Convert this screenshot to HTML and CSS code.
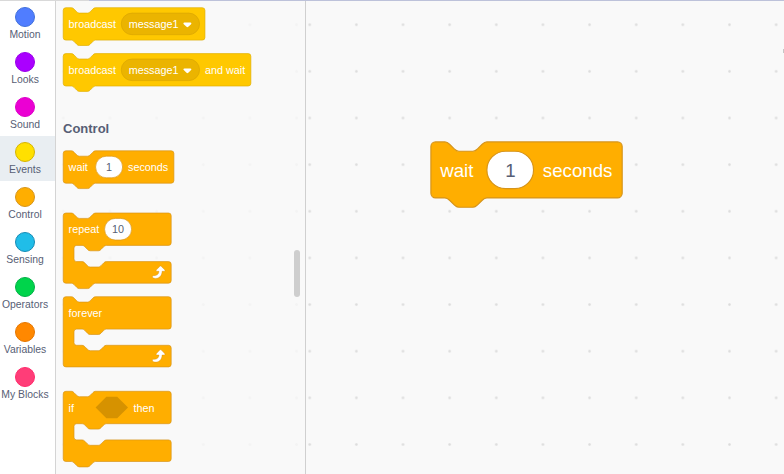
FILE: index.html
```html
<!DOCTYPE html>
<html lang="en">
<head>
<meta charset="utf-8">
<title>Blocks</title>
<link rel="stylesheet" href="styles.css">
</head>
<body>
<div class="editor">
  <nav class="categories">
    <div class="category"><span class="bubble motion"></span><span class="name">Motion</span></div>
    <div class="category"><span class="bubble looks"></span><span class="name">Looks</span></div>
    <div class="category"><span class="bubble sound"></span><span class="name">Sound</span></div>
    <div class="category selected"><span class="bubble events"></span><span class="name">Events</span></div>
    <div class="category"><span class="bubble control"></span><span class="name">Control</span></div>
    <div class="category"><span class="bubble sensing"></span><span class="name">Sensing</span></div>
    <div class="category"><span class="bubble operators"></span><span class="name">Operators</span></div>
    <div class="category"><span class="bubble variables"></span><span class="name">Variables</span></div>
    <div class="category"><span class="bubble myblocks"></span><span class="name">My Blocks</span></div>
  </nav>

  <section class="flyout">
    <svg class="block b-broadcast" width="143" height="38">
      <g class="yellow" transform="translate(.2 .7) scale(.675)">
        <path class="body" d="M0,4A4,4 0 0,1 4,0H12c2,0 3,1 4,2l4,4c1,1 2,2 4,2h12c2,0 3,-1 4,-2l4,-4c1,-1 2,-2 4,-2H206a4,4 0 0,1 4,4v40a4,4 0 0,1 -4,4H48c-2,0 -3,1 -4,2l-4,4c-1,1 -2,2 -4,2h-12c-2,0 -3,-1 -4,-2l-4,-4c-1,-1 -2,-2 -4,-2H4a4,4 0 0,1 -4,-4z"/>
        <text x="8" y="29.6">broadcast</text>
        <rect class="menu" x="86" y="8" width="116" height="32" rx="16"/>
        <text x="97" y="29.6">message1</text>
        <path class="arrow" d="M179.600,22h8.800c1.500,0 2,1.400 1,2.400l-4.100,4c-.8,.8 -1.800,.8 -2.600,0l-4.100,-4c-1,-1 -.5,-2.400 1,-2.400z"/>
      </g>
    </svg>
    <svg class="block b-broadcast-wait" width="189" height="38">
      <g class="yellow" transform="translate(.2 .6) scale(.675)">
        <path class="body" d="M0,4A4,4 0 0,1 4,0H12c2,0 3,1 4,2l4,4c1,1 2,2 4,2h12c2,0 3,-1 4,-2l4,-4c1,-1 2,-2 4,-2H274a4,4 0 0,1 4,4v40a4,4 0 0,1 -4,4H48c-2,0 -3,1 -4,2l-4,4c-1,1 -2,2 -4,2h-12c-2,0 -3,-1 -4,-2l-4,-4c-1,-1 -2,-2 -4,-2H4a4,4 0 0,1 -4,-4z"/>
        <text x="8" y="29.6">broadcast</text>
        <rect class="menu" x="86" y="8" width="116" height="32" rx="16"/>
        <text x="97" y="29.6">message1</text>
        <path class="arrow" d="M179.600,22h8.800c1.500,0 2,1.400 1,2.400l-4.100,4c-.8,.8 -1.800,.8 -2.600,0l-4.100,-4c-1,-1 -.5,-2.400 1,-2.400z"/>
        <text x="210" y="29.6">and wait</text>
      </g>
    </svg>
    <h2 class="heading">Control</h2>
    <svg class="block b-wait" width="111" height="38">
      <g class="orange" transform="translate(.2 .8) scale(.675)">
        <path class="body" d="M0,4A4,4 0 0,1 4,0H12c2,0 3,1 4,2l4,4c1,1 2,2 4,2h12c2,0 3,-1 4,-2l4,-4c1,-1 2,-2 4,-2H160a4,4 0 0,1 4,4v40a4,4 0 0,1 -4,4H48c-2,0 -3,1 -4,2l-4,4c-1,1 -2,2 -4,2h-12c-2,0 -3,-1 -4,-2l-4,-4c-1,-1 -2,-2 -4,-2H4a4,4 0 0,1 -4,-4z"/>
        <text x="8" y="29.6">wait</text>
        <rect class="input" x="48" y="8" width="40" height="32" rx="16"/>
        <text class="value" x="68" y="29.6">1</text>
        <text x="96" y="29.6">seconds</text>
      </g>
    </svg>
    <svg class="block b-repeat" width="109" height="76">
      <g class="orange" transform="translate(.2 0) scale(.675)">
        <path class="body" d="M0,4A4,4 0 0,1 4,0H12c2,0 3,1 4,2l4,4c1,1 2,2 4,2h12c2,0 3,-1 4,-2l4,-4c1,-1 2,-2 4,-2H156a4,4 0 0,1 4,4v40a4,4 0 0,1 -4,4H64c-2,0 -3,1 -4,2l-4,4c-1,1 -2,2 -4,2h-12c-2,0 -3,-1 -4,-2l-4,-4c-1,-1 -2,-2 -4,-2h-8a4,4 0 0,0 -4,4v16a4,4 0 0,0 4,4h8c2,0 3,1 4,2l4,4c1,1 2,2 4,2h12c2,0 3,-1 4,-2l4,-4c1,-1 2,-2 4,-2H156a4,4 0 0,1 4,4v24a4,4 0 0,1 -4,4H48c-2,0 -3,1 -4,2l-4,4c-1,1 -2,2 -4,2h-12c-2,0 -3,-1 -4,-2l-4,-4c-1,-1 -2,-2 -4,-2H4a4,4 0 0,1 -4,-4z"/>
        <text x="8" y="29.6">repeat</text>
        <rect class="input" x="61.3" y="8" width="40" height="32" rx="16"/>
        <text class="value" x="81.3" y="29.6">10</text>
        <path class="loop" transform="translate(-1 1)" d="M133.4,94.3c-.9,-1.6 .4,-2.600 2,-2.500c4,.2 7.200,-2 7.500,-6.400h-2.700c-1.5,0 -1.9,-1.3 -1,-2.3l4.8,-5c.7,-.8 1.7,-.8 2.4,0l4.9,5c.9,1 .5,2.3 -1,2.3h-2.800c-.2,7.2 -4.5,10.7 -10.100,10.5c-1.7,0 -3.2,-.4 -4,-1.6z"/>
      </g>
    </svg>
    <svg class="block b-forever" width="109" height="71">
      <g class="orange" transform="translate(.2 .7) scale(.675)">
        <path class="body" d="M0,4A4,4 0 0,1 4,0H12c2,0 3,1 4,2l4,4c1,1 2,2 4,2h12c2,0 3,-1 4,-2l4,-4c1,-1 2,-2 4,-2H156a4,4 0 0,1 4,4v40a4,4 0 0,1 -4,4H64c-2,0 -3,1 -4,2l-4,4c-1,1 -2,2 -4,2h-12c-2,0 -3,-1 -4,-2l-4,-4c-1,-1 -2,-2 -4,-2h-8a4,4 0 0,0 -4,4v16a4,4 0 0,0 4,4h8c2,0 3,1 4,2l4,4c1,1 2,2 4,2h12c2,0 3,-1 4,-2l4,-4c1,-1 2,-2 4,-2H156a4,4 0 0,1 4,4v24a4,4 0 0,1 -4,4H4a4,4 0 0,1 -4,-4z"/>
        <text x="8" y="29.6">forever</text>
        <path class="loop" transform="translate(-1 1)" d="M133.4,94.3c-.9,-1.6 .4,-2.600 2,-2.500c4,.2 7.200,-2 7.500,-6.400h-2.700c-1.5,0 -1.9,-1.3 -1,-2.3l4.8,-5c.7,-.8 1.7,-.8 2.4,0l4.9,5c.9,1 .5,2.3 -1,2.3h-2.800c-.2,7.2 -4.5,10.7 -10.100,10.5c-1.7,0 -3.2,-.4 -4,-1.6z"/>
      </g>
    </svg>
    <svg class="block b-if" width="109" height="76">
      <g class="orange" transform="translate(.2 .3) scale(.675)">
        <path class="body" d="M0,4A4,4 0 0,1 4,0H12c2,0 3,1 4,2l4,4c1,1 2,2 4,2h12c2,0 3,-1 4,-2l4,-4c1,-1 2,-2 4,-2H156a4,4 0 0,1 4,4v40a4,4 0 0,1 -4,4H64c-2,0 -3,1 -4,2l-4,4c-1,1 -2,2 -4,2h-12c-2,0 -3,-1 -4,-2l-4,-4c-1,-1 -2,-2 -4,-2h-8a4,4 0 0,0 -4,4v16a4,4 0 0,0 4,4h8c2,0 3,1 4,2l4,4c1,1 2,2 4,2h12c2,0 3,-1 4,-2l4,-4c1,-1 2,-2 4,-2H156a4,4 0 0,1 4,4v24a4,4 0 0,1 -4,4H48c-2,0 -3,1 -4,2l-4,4c-1,1 -2,2 -4,2h-12c-2,0 -3,-1 -4,-2l-4,-4c-1,-1 -2,-2 -4,-2H4a4,4 0 0,1 -4,-4z"/>
        <text x="8" y="30.3">if</text>
        <path class="condition" d="M64,8h16l16,16l-16,16h-16l-16,-16z"/>
        <text x="104" y="30.3">then</text>
      </g>
    </svg>
    <div class="scrollbar"></div>
  </section>

  <main class="workspace">
    <svg class="block placed" width="194" height="68">
      <g class="orange" transform="translate(.9 .9) scale(1.1664)">
        <path class="body" d="M0,4A4,4 0 0,1 4,0H12c2,0 3,1 4,2l4,4c1,1 2,2 4,2h12c2,0 3,-1 4,-2l4,-4c1,-1 2,-2 4,-2H160a4,4 0 0,1 4,4v40a4,4 0 0,1 -4,4H48c-2,0 -3,1 -4,2l-4,4c-1,1 -2,2 -4,2h-12c-2,0 -3,-1 -4,-2l-4,-4c-1,-1 -2,-2 -4,-2H4a4,4 0 0,1 -4,-4z"/>
        <text x="8" y="29.8">wait</text>
        <rect class="input" x="48" y="8" width="40" height="32" rx="16"/>
        <text class="value" x="68.300" y="29.8">1</text>
        <text x="96" y="29.8">seconds</text>
      </g>
    </svg>
    <span class="zoom-edge"></span>
  </main>
</div>
</body>
</html>
```
FILE: styles.css
```css
* { box-sizing: border-box; }

body {
  margin: 0;
  overflow: hidden;
  font-family: "Liberation Sans", Arial, sans-serif;
}

.editor {
  display: flex;
  width: 784px;
  height: 474px;
  background: linear-gradient(90deg, #d9d9d9 89px, #bdc2da 89px) 0 0 / 100% 1px no-repeat #f9f9f9;
  padding-top: 1px;
}

.categories {
  width: 56px;
  background: #fff;
  border-right: 1px solid #d4d4d4;
}

.category {
  display: flex;
  flex-direction: column;
  align-items: center;
  height: 45px;
  padding: 6px 0 0;
  margin-right: 5px;
  color: #575e75;
}

.category.selected {
  margin-right: 0;
  padding-right: 5px;
  background: #e9eef2;
}

.bubble {
  width: 20px;
  height: 20px;
  border: 1px solid;
  border-radius: 50%;
}

.name {
  margin-top: 1px;
  font-size: 10.4px;
  line-height: 13px;
  white-space: nowrap;
}

.motion { background: #507dff; border-color: #4070dc; }
.looks { background: #aa00ff; border-color: #9a00ea; }
.sound { background: #eb00d3; border-color: #dc00c8; }
.events { background: #ffe000; border-color: #d6b400; }
.control { background: #ffae00; border-color: #d6941a; }
.sensing { background: #20bde8; border-color: #168bb5; }
.operators { background: #00d44b; border-color: #00b046; }
.variables { background: #ff8800; border-color: #e57600; }
.myblocks { background: #ff3d78; border-color: #ff2a6c; }

.flyout {
  position: relative;
  display: flex;
  flex-direction: column;
  align-items: flex-start;
  width: 250px;
  padding: 6px 0 0 7px;
  border-right: 1px solid #d0d0d0;
  background: radial-gradient(circle, #f4f4f4 1px, transparent 1.6px) -16px .4px / 46.656px 46.656px;
}

.block {
  flex: none;
  overflow: visible;
}

.b-broadcast-wait { margin-top: 8px; }

.heading {
  height: 16px;
  margin: 30px 0 13px;
  color: #575e75;
  font-size: 13px;
  line-height: 16px;
}

.b-repeat { margin-top: 25px; }
.b-forever { margin-top: 7px; }
.b-if { margin-top: 24px; }

.block text {
  fill: #fff;
  font-size: 16px;
  font-weight: 500;
}

.block .value {
  fill: #575e75;
  text-anchor: middle;
}

.yellow .body { fill: #ffc800; stroke: #dfae00; }
.yellow .menu { fill: #ebb400; stroke: #d9a500; }
.orange .body { fill: #ffae00; stroke: #d6941a; }
.input { fill: #fff; stroke: #d6941a; }
.condition { fill: #d69200; }
.arrow, .loop { fill: #fff; }
.loop { stroke: #cf8b17; stroke-width: .6; }

.scrollbar {
  position: absolute;
  top: 249px;
  right: 5px;
  width: 6px;
  height: 47px;
  border-radius: 3px;
  background: #cecece;
}

.workspace {
  position: relative;
  flex: 1;
  background: radial-gradient(circle, #dcdcdc .8px, transparent 1.7px) -19.6px .4px / 46.656px 46.656px;
}

.placed {
  position: absolute;
  left: 124px;
  top: 140px;
}

.zoom-edge {
  position: absolute;
  top: 48px;
  right: 0;
  width: 1px;
  height: 4px;
  background: #c6c6c6;
}
```
